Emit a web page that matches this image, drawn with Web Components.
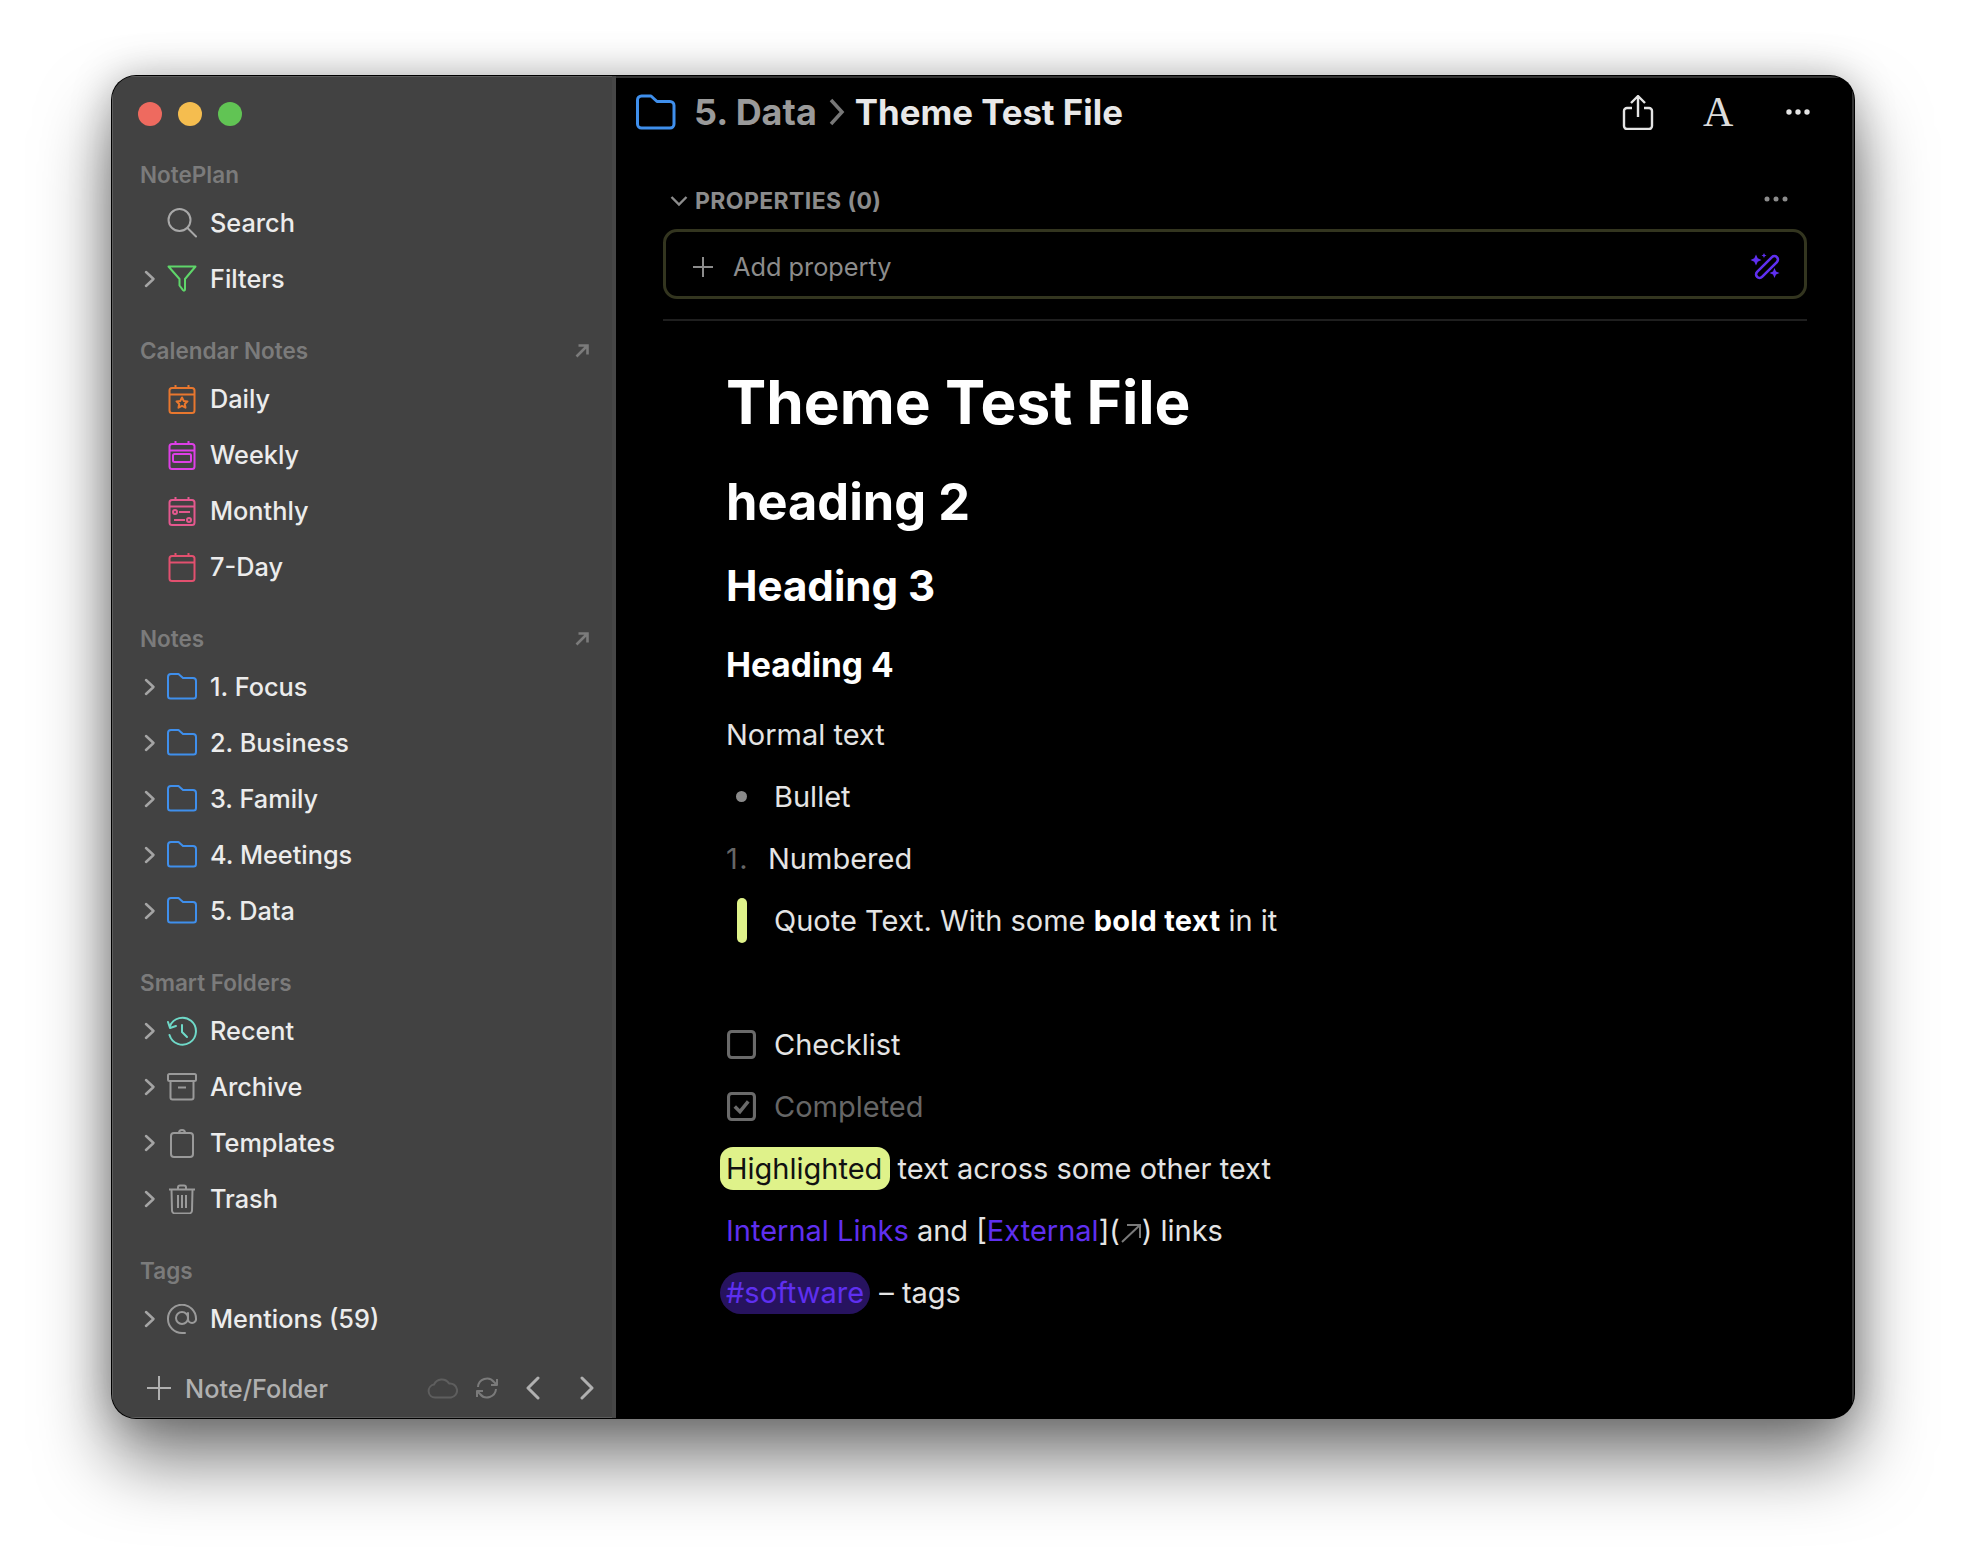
<!DOCTYPE html>
<html>
<head>
<meta charset="utf-8">
<title>Theme Test File</title>
<style>
html,body{margin:0;background:#fff;}
body{width:1966px;height:1566px;padding:76px 0 0 112px;box-sizing:border-box;font-family:Inter,"Liberation Sans",sans-serif;overflow:hidden;}
</style>
</head>
<body>
<app-window>
    <side-bar slot="side">
        <side-section title="NotePlan">
            <side-row icon="search" label="Search" flat></side-row>
            <side-row icon="filter" label="Filters"></side-row>
        </side-section>
        <side-section title="Calendar Notes" arrow>
            <side-row icon="daily" label="Daily" flat></side-row>
            <side-row icon="weekly" label="Weekly" flat></side-row>
            <side-row icon="monthly" label="Monthly" flat></side-row>
            <side-row icon="sevenday" label="7-Day" flat></side-row>
        </side-section>
        <side-section title="Notes" arrow>
            <side-row icon="folder" label="1. Focus"></side-row>
            <side-row icon="folder" label="2. Business"></side-row>
            <side-row icon="folder" label="3. Family"></side-row>
            <side-row icon="folder" label="4. Meetings"></side-row>
            <side-row icon="folder" label="5. Data"></side-row>
        </side-section>
        <side-section title="Smart Folders">
            <side-row icon="recent" label="Recent"></side-row>
            <side-row icon="archive" label="Archive"></side-row>
            <side-row icon="templates" label="Templates"></side-row>
            <side-row icon="trash" label="Trash"></side-row>
        </side-section>
        <side-section title="Tags">
            <side-row icon="at" label="Mentions (59)"></side-row>
        </side-section>
    </side-bar>
    <note-header slot="main" folder="5. Data" name="Theme Test File"></note-header>
    <property-box slot="main"></property-box>
    <note-body slot="main">
        <note-heading level="1">Theme Test File</note-heading>
        <note-heading level="2">heading 2</note-heading>
        <note-heading level="3">Heading 3</note-heading>
        <note-heading level="4">Heading 4</note-heading>
        <note-item>Normal text</note-item>
        <note-item marker="bullet">Bullet</note-item>
        <note-item marker="number">Numbered</note-item>
        <note-item marker="quote">Quote Text. With some <note-bold>bold text</note-bold> in it</note-item>
        <note-item></note-item>
        <note-item marker="check">Checklist</note-item>
        <note-item marker="done" muted>Completed</note-item>
        <note-item><note-mark>Highlighted</note-mark> text across some other text</note-item>
        <note-item><note-link>Internal Links</note-link> and [<note-link>External</note-link>](<ext-arrow></ext-arrow>) links</note-item>
        <note-item><note-tag>#software</note-tag> – tags</note-item>
    </note-body>
</app-window>

<script>
const ICONS = {
    search: `<g stroke="#a8a8a8" stroke-width="2"><circle cx="12.500" cy="12" r="11"/><path d="M20.500 20l8.500 8.500" stroke-linecap="round"/></g>`,
    filter: `<path d="M1.500 2.500h27l-10.500 12.500v10.500c0 1.200-1.300 1.500-2 .7l-3.500-4.700v-6.500z" stroke="#5fd66a" stroke-width="2" stroke-linejoin="round"/>`,
    daily: `<g stroke="#e8772e" stroke-width="2"><rect x="2.500" y="4" width="25" height="25" rx="2.500"/><path d="M2.500 10.500h25M8.500 1v3M21.500 1v3"/><path d="M15 13.500l1.700 3.400 3.800.5-2.700 2.600.7 3.700-3.500-1.800-3.500 1.800.7-3.700-2.700-2.600 3.800-.5z" stroke-linejoin="round"/></g>`,
    weekly: `<g stroke="#dd3fe6" stroke-width="2"><rect x="2.500" y="4" width="25" height="25" rx="2.500"/><path d="M2.500 10.500h25M8.500 1v3M21.500 1v3"/><rect x="6" y="14" width="18" height="8" rx="1.500"/></g>`,
    monthly: `<g stroke="#e4588e" stroke-width="2"><rect x="2.500" y="4" width="25" height="25" rx="2.500"/><path d="M2.500 10.500h25M8.500 1v3M21.500 1v3M12 16h11M7 24h11"/><circle cx="8" cy="16" r="2"/><circle cx="22" cy="24" r="2"/></g>`,
    sevenday: `<g stroke="#e2506f" stroke-width="2"><rect x="2.500" y="4" width="25" height="25" rx="2.500"/><path d="M2.500 10.500h25M8.500 1v3M21.500 1v3"/></g>`,
    folder: `<path d="M1 5a3 3 0 013-3h7.500l4.500 4h10a3 3 0 013 3v15a2.500 2.500 0 01-2.500 2.500h-23A2.500 2.500 0 011 24z" stroke="#3f8fec" stroke-width="2" stroke-linejoin="round"/>`,
    recent: `<g stroke="#6fd9c8" stroke-width="2" stroke-linecap="round" stroke-linejoin="round"><path d="M3 10a13.500 13.500 0 11-.5 9"/><path d="M1 6l2 6 6-2"/><path d="M15 9v7l5 5"/></g>`,
    archive: `<g stroke="#9a9a9a" stroke-width="2" stroke-linejoin="round"><rect x="1" y="2" width="28" height="7" rx="1.500"/><path d="M3.500 9v16.500a2 2 0 002 2h19a2 2 0 002-2V9M11 15.500h8"/></g>`,
    templates: `<g stroke="#9a9a9a" stroke-width="2" stroke-linejoin="round"><path d="M9 5H7a3 3 0 00-3 3v18a3 3 0 003 3h16a3 3 0 003-3V8a3 3 0 00-3-3h-2"/><path d="M9 5h12M12 5a3 3 0 016 0"/></g>`,
    trash: `<g stroke="#9a9a9a" stroke-width="2" stroke-linejoin="round"><path d="M2 5.500h26M11 5V3.500a2 2 0 012-2h4a2 2 0 012 2V5M4.500 5.500l.5 21a3 3 0 003 3h14a3 3 0 003-3l.5-21M11 11v13M15 11v13M19 11v13"/></g>`,
    at: `<g stroke="#9a9a9a" stroke-width="2" stroke-linecap="round"><circle cx="15" cy="14" r="6"/><path d="M21 9v6a4 4 0 004 4 4 4 0 004-4.500A14 14 0 101 15c0 8 6.500 14 14 14h3"/></g>`
};

const CHEVRON = `<svg width="12" height="18" viewBox="0 0 12 18" fill="none"><path d="M2 2l7.500 7-7.500 7" stroke="#a4a4a4" stroke-width="2.500" stroke-linecap="round" stroke-linejoin="round"/></svg>`;

class AppWindow extends HTMLElement{
    constructor(){
        super();
        this.attachShadow({ mode : "open" });
    }
    connectedCallback(){
        this.shadowRoot.innerHTML = `
            <style>
                :host{
                    display: flex;
                    width: 1742px;
                    height: 1342px;
                    border-radius: 24px;
                    overflow: hidden;
                    position: relative;
                    box-shadow: 0 0 0 1px #000, 0 42px 72px rgba(0,0,0,.52), 0 0 40px rgba(0,0,0,.25);
                    clip-path: inset(-200px round 24px);
                    background: #000;
                }
                .side{
                    width: 500px;
                    flex: none;
                    background: #424242;
                    border-right: 4px solid #474747;
                    box-shadow: inset 1px 1px 0 #5c5c5c, inset 0 -1px 0 #5c5c5c;
                }
                .main{
                    flex: 1;
                    display: flex;
                    flex-direction: column;
                    background: #000;
                    box-shadow: inset -2px 2px 0 #333;
                }
            </style>
            <div class="side"><slot name="side"></slot></div>
            <div class="main"><slot name="main"></slot></div>
        `;
    }
}

class SideBar extends HTMLElement{
    constructor(){
        super();
        this.attachShadow({ mode : "open" });
    }
    connectedCallback(){
        this.shadowRoot.innerHTML = `
            <style>
                :host{
                    display: flex;
                    flex-direction: column;
                    height: 100%;
                }
                .lights{
                    display: flex;
                    gap: 16px;
                    padding: 26px 0 0 26px;
                    height: 53.5px;
                    flex: none;
                }
                .lights i{ width: 24px; height: 24px; border-radius: 50%; }
                .sections{ flex: 1; display: flex; flex-direction: column; gap: 25px; }
                .foot{
                    height: 58px;
                    flex: none;
                    display: flex;
                    align-items: center;
                    padding: 0 17px 2px 35px;
                    box-sizing: border-box;
                    color: #b0b0b0;
                    font: 500 25.300px Inter, sans-serif;
                }
                .foot .name{ margin-left: 14px; flex: 1; }
                .foot svg{ display: block; flex: none; }
            </style>
            <div class="lights">
                <i style="background:#ee6a5f"></i><i style="background:#f5bd4f"></i><i style="background:#61c454"></i>
            </div>
            <div class="sections"><slot></slot></div>
            <div class="foot">
                <svg width="24" height="24" viewBox="0 0 24 24" fill="none"><path d="M12 0v24M0 12h24" stroke="#b0b0b0" stroke-width="2"/></svg>
                <span class="name">Note/Folder</span>
                <svg width="31" height="22" viewBox="0 0 31 22" fill="none"><path d="M8 20.500a6.500 6.500 0 01-1-12.900A8.500 8.500 0 0122 6.500a7 7 0 012 14z" stroke="#5e5e5e" stroke-width="2" stroke-linejoin="round"/></svg>
                <svg style="margin-left:17px" width="24" height="24" viewBox="0 0 24 24" fill="none"><path d="M3 11a9 9 0 0116-5l3 3M21 13a9 9 0 01-16 5l-3-3M22 3v6h-6M2 21v-6h6" stroke="#7a7a7a" stroke-width="2" stroke-linejoin="round"/></svg>
                <svg style="margin-left:26.500px" width="16" height="24" viewBox="0 0 16 24" fill="none"><path d="M13 2L3 12l10 10" stroke="#b0b0b0" stroke-width="3" stroke-linecap="round" stroke-linejoin="round"/></svg>
                <svg style="margin-left:38px" width="16" height="24" viewBox="0 0 16 24" fill="none"><path d="M3 2l10 10-10 10" stroke="#b0b0b0" stroke-width="3" stroke-linecap="round" stroke-linejoin="round"/></svg>
            </div>
        `;
    }
}

class SideSection extends HTMLElement{
    constructor(){
        super();
        this.attachShadow({ mode : "open" });
    }
    connectedCallback(){
        const arrow = this.hasAttribute("arrow")
            ? `<svg width="14" height="14" viewBox="0 0 14 14" fill="none"><path d="M1.500 12.500L12 2M3.500 1.500h9v9" stroke="#7b7b7b" stroke-width="2.600"/></svg>`
            : "";
        this.shadowRoot.innerHTML = `
            <style>
                :host{ display: block; }
                .title{
                    height: 39px;
                    display: flex;
                    align-items: center;
                    justify-content: space-between;
                    padding: 0 23px 1px 28px;
                    box-sizing: border-box;
                    color: #7b7b7b;
                    font: 600 22.500px Inter, sans-serif;
                }
            </style>
            <div class="title"><span>${this.getAttribute("title")}</span>${arrow}</div>
            <slot></slot>
        `;
    }
}

class SideRow extends HTMLElement{
    constructor(){
        super();
        this.attachShadow({ mode : "open" });
    }
    connectedCallback(){
        const flat = this.hasAttribute("flat");
        this.shadowRoot.innerHTML = `
            <style>
                :host{
                    display: flex;
                    align-items: center;
                    height: 56px;
                    color: #ececec;
                    font: 500 25.300px Inter, sans-serif;
                }
                .chev{ width: 12px; margin-left: 32px; display: flex; }
                svg.ic{ margin-left: 11px; display: block; flex: none; }
                .label{ margin-left: 13px; }
            </style>
            <span class="chev">${flat ? "" : CHEVRON}</span>
            <svg class="ic" width="30" height="30" viewBox="0 0 30 30" fill="none">${ICONS[this.getAttribute("icon")]}</svg>
            <span class="label">${this.getAttribute("label")}</span>
        `;
    }
}

class NoteHeader extends HTMLElement{
    constructor(){
        super();
        this.attachShadow({ mode : "open" });
    }
    connectedCallback(){
        this.shadowRoot.innerHTML = `
            <style>
                :host{
                    display: flex;
                    align-items: center;
                    height: 72px;
                    flex: none;
                    padding: 0 43px 0 20px;
                    font: 700 36px Inter, sans-serif;
                    color: #e8e8e8;
                }
                .folder{ color: #9a9a9a; margin-left: 18px; }
                .sep{ margin: 0 10px 0 12px; display: block; }
                .name{ flex: 1; font-size: 34.800px; }
                .tools{ display: flex; align-items: center; font-weight: 400; }
                .a{ font: 400 42px/1 "Liberation Serif", serif; color: #dcdcdc; width: 30px; text-align: center; margin: 0 52px 0 49px; }
                svg{ display: block; flex: none; }
            </style>
            <svg width="40" height="36" viewBox="0 0 40 36" fill="none"><path d="M1.500 6a4 4 0 014-4h9.500l6 5.500h13a4 4 0 014 4V30a4 4 0 01-4 4H5.500a4 4 0 01-4-4z" stroke="#3f8fec" stroke-width="3" stroke-linejoin="round"/></svg>
            <span class="folder">${this.getAttribute("folder")}</span>
            <svg class="sep" width="16" height="28" viewBox="0 0 16 28" fill="none"><path d="M2 2l11 12L2 26" stroke="#777" stroke-width="3.500"/></svg>
            <span class="name">${this.getAttribute("name")}</span>
            <div class="tools">
                <svg width="32" height="35" viewBox="0 0 32 35" fill="none"><path d="M16 22V2M9 8l7-7 7 7M10 13H5a3 3 0 00-3 3v15a3 3 0 003 3h22a3 3 0 003-3V16a3 3 0 00-3-3h-5" stroke="#e4e4e4" stroke-width="2.400" stroke-linejoin="round"/></svg>
                <span class="a">A</span>
                <svg width="26" height="8" viewBox="0 0 26 8" fill="#e4e4e4"><circle cx="4" cy="4" r="2.700"/><circle cx="13" cy="4" r="2.700"/><circle cx="22" cy="4" r="2.700"/></svg>
            </div>
        `;
    }
}

class PropertyBox extends HTMLElement{
    constructor(){
        super();
        this.attachShadow({ mode : "open" });
    }
    connectedCallback(){
        this.shadowRoot.innerHTML = `
            <style>
                :host{
                    display: block;
                    flex: none;
                    margin: 0 47px;
                    padding-bottom: 20px;
                    border-bottom: 2px solid #1f1f1f;
                }
                .top{
                    height: 81px;
                    box-sizing: border-box;
                    padding: 25px 19px 0 7px;
                    display: flex;
                    align-items: center;
                    color: #8c8c8c;
                    font: 700 23px Inter, sans-serif;
                    letter-spacing: .4px;
                }
                .top span{ flex: 1; margin-left: 7px; }
                .top svg{ flex: none; }
                .box{
                    height: 70px;
                    box-sizing: border-box;
                    border: 3px solid #33351f;
                    border-radius: 14px;
                    display: flex;
                    align-items: center;
                    padding: 5px 24px 0 26px;
                    color: #8c8c8c;
                    font: 400 25.300px Inter, sans-serif;
                }
                .box span{ flex: 1; margin-left: 19px; }
                .box svg{ display: block; flex: none; }
            </style>
            <div class="top">
                <svg width="18" height="12" viewBox="0 0 18 12" fill="none"><path d="M1.500 2l7.500 7.500L16.500 2" stroke="#8c8c8c" stroke-width="2.400"/></svg>
                <span>PROPERTIES (0)</span>
                <svg style="margin-top:-4px" width="24" height="6" viewBox="0 0 24 6" fill="#8c8c8c"><circle cx="3" cy="3" r="2.500"/><circle cx="12" cy="3" r="2.500"/><circle cx="21" cy="3" r="2.500"/></svg>
            </div>
            <div class="box">
                <svg width="22" height="22" viewBox="0 0 22 22" fill="none"><path d="M11 1v20M1 11h20" stroke="#8c8c8c" stroke-width="2"/></svg>
                <span>Add property</span>
                <svg width="30" height="28" viewBox="0 0 30 28" fill="none">
                    <rect x="-3.500" y="-14" width="7" height="28" rx="3.500" transform="translate(17 14) rotate(45)" stroke="#5f2ff0" stroke-width="2.600"/>
                    <path d="M6 1.500l1.700 3.800L11.500 7 7.700 8.700 6 12.500 4.300 8.700.5 7l3.800-1.700zM14 0l.8 1.700 1.700.8-1.700.8-.8 1.700-.8-1.700-1.700-.8 1.700-.8zM24.500 15l1.500 3.500 3.500 1.500-3.500 1.500-1.500 3.500-1.500-3.500-3.500-1.500 3.500-1.500z" fill="#5f2ff0"/>
                </svg>
            </div>
        `;
    }
}

class NoteBody extends HTMLElement{
    constructor(){
        super();
        this.attachShadow({ mode : "open" });
    }
    connectedCallback(){
        this.shadowRoot.innerHTML = `
            <style>
                :host{
                    display: block;
                    padding: 42px 0 0 110px;
                    color: #e4e4e4;
                    font: 400 29px Inter, sans-serif;
                }
            </style>
            <slot></slot>
        `;
    }
}

class NoteHeading extends HTMLElement{
    constructor(){
        super();
        this.attachShadow({ mode : "open" });
    }
    connectedCallback(){
        const styles = {
            1: "font-size:60.300px;line-height:80px;",
            2: "font-size:50.500px;line-height:64px;margin-top:27px;",
            3: "font-size:42.100px;line-height:56px;margin-top:24px;",
            4: "font-size:33.500px;line-height:44px;margin-top:29px;margin-bottom:16px;"
        };
        this.shadowRoot.innerHTML = `
            <style>
                :host{ display: block; color: #fff; font-weight: 700; font-family: Inter, sans-serif; ${styles[this.getAttribute("level")]} }
            </style>
            <slot></slot>
        `;
    }
}

class NoteItem extends HTMLElement{
    constructor(){
        super();
        this.attachShadow({ mode : "open" });
    }
    connectedCallback(){
        const marker = this.getAttribute("marker");
        const box = `<rect x="1.500" y="1.500" width="25" height="25" rx="3" stroke="#6a6a6a" stroke-width="3"/>`;
        const marks = {
            bullet: `<span class="m"><i style="display:block;width:11px;height:11px;border-radius:50%;background:#8a8a8a;margin-left:10px"></i></span>`,
            number: `<span class="m n">1.</span>`,
            quote: `<span class="m"><i style="display:block;width:10px;height:45px;border-radius:5px;background:#dff28a;margin-left:11px"></i></span>`,
            check: `<span class="m"><svg style="margin-left:1px" width="29" height="29" viewBox="0 0 28 28" fill="none">${box}</svg></span>`,
            done: `<span class="m"><svg style="margin-left:1px" width="29" height="29" viewBox="0 0 28 28" fill="none">${box}<path d="M7.500 14l5 5 8-10" stroke="#6a6a6a" stroke-width="3.400"/></svg></span>`
        };
        this.shadowRoot.innerHTML = `
            <style>
                :host{
                    display: flex;
                    align-items: center;
                    height: 62.100px;
                    color: ${this.hasAttribute("muted") ? "#666" : "inherit"};
                }
                .m{ width: 48px; flex: none; display: flex; align-items: center; }
                .m svg{ display: block; }
                .n{ width: 42px; color: #666; letter-spacing: 1.500px; }
                .t{ display: block; }
            </style>
            ${marks[marker] || ""}<span class="t"><slot></slot></span>
        `;
    }
}

class NoteBold extends HTMLElement{
    constructor(){
        super();
        this.attachShadow({ mode : "open" }).innerHTML = `<style>:host{ font-weight: 700; color: #fff; letter-spacing: .3px; }</style><slot></slot>`;
    }
}

class NoteMark extends HTMLElement{
    constructor(){
        super();
        this.attachShadow({ mode : "open" }).innerHTML = `<style>:host{ display: inline-block; background: #dff28a; color: #111; border-radius: 13px; line-height: 43px; padding: 0 8px 0 6px; margin: 0 -1px 0 -6px; }</style><slot></slot>`;
    }
}

class NoteLink extends HTMLElement{
    constructor(){
        super();
        this.attachShadow({ mode : "open" }).innerHTML = `<style>:host{ color: #5f2ff0; }</style><slot></slot>`;
    }
}

class NoteTag extends HTMLElement{
    constructor(){
        super();
        this.attachShadow({ mode : "open" }).innerHTML = `<style>:host{ display: inline-block; background: #27135f; color: #5f2ff0; border-radius: 21px; line-height: 42px; padding: 0 6px; margin: 0 1px 0 -6px; }</style><slot></slot>`;
    }
}

class ExtArrow extends HTMLElement{
    constructor(){
        super();
        this.attachShadow({ mode : "open" }).innerHTML = `<style>:host{ display: inline-block; width: 22px; height: 22px; vertical-align: -3px; }svg{ display: block; }</style><svg width="22" height="22" viewBox="0 0 22 22" fill="none"><path d="M2 20L20 3M7 3h13v13" stroke="#7a7a7a" stroke-width="2"/></svg>`;
    }
}

customElements.define("app-window", AppWindow);
customElements.define("side-bar", SideBar);
customElements.define("side-section", SideSection);
customElements.define("side-row", SideRow);
customElements.define("note-header", NoteHeader);
customElements.define("property-box", PropertyBox);
customElements.define("note-body", NoteBody);
customElements.define("note-heading", NoteHeading);
customElements.define("note-item", NoteItem);
customElements.define("note-bold", NoteBold);
customElements.define("note-mark", NoteMark);
customElements.define("note-link", NoteLink);
customElements.define("note-tag", NoteTag);
customElements.define("ext-arrow", ExtArrow);
</script>
</body>
</html>
